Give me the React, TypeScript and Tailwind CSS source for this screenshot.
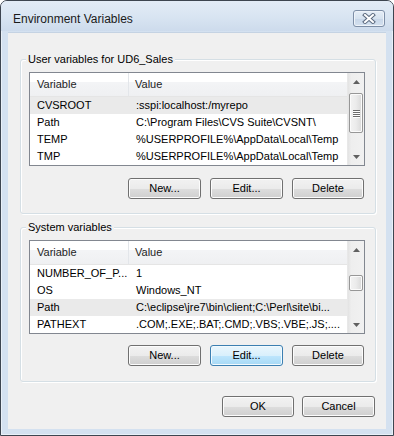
import React from 'react';

interface Row {
  name: string;
  value: string;
  selected?: boolean;
}

const userVars: Row[] = [
  { name: 'CVSROOT', value: ':sspi:localhost:/myrepo', selected: true },
  { name: 'Path', value: 'C:\\Program Files\\CVS Suite\\CVSNT\\' },
  { name: 'TEMP', value: '%USERPROFILE%\\AppData\\Local\\Temp' },
  { name: 'TMP', value: '%USERPROFILE%\\AppData\\Local\\Temp' },
];

const systemVars: Row[] = [
  { name: 'NUMBER_OF_P...', value: '1' },
  { name: 'OS', value: 'Windows_NT' },
  { name: 'Path', value: 'C:\\eclipse\\jre7\\bin\\client;C:\\Perl\\site\\bi...', selected: true },
  { name: 'PATHEXT', value: '.COM;.EXE;.BAT;.CMD;.VBS;.VBE;.JS;....' },
];

const font = "font-['Segoe_UI','Liberation_Sans',Arial,sans-serif]";

const WinButton: React.FC<{ label: string; focused?: boolean; className?: string }> = ({ label, focused, className = 'w-[73px]' }) => (
  <button
    type="button"
    className={`${className} h-[21px] rounded-[3px] border text-[11px] text-black leading-none flex items-center justify-center ${
      focused
        ? 'border-[#3c7fb1] bg-[linear-gradient(to_bottom,#eaf6fd_0%,#d9f0fc_50%,#bee6fd_51%,#a7d9f5_100%)] shadow-[inset_0_0_0_1px_#f2fafe]'
        : 'border-[#707070] bg-[linear-gradient(to_bottom,#f2f2f2_0%,#ebebeb_50%,#dddddd_51%,#cfcfcf_100%)] shadow-[inset_0_0_0_1px_#fcfcfc]'
    }`}
  >
    {label}
  </button>
);

const Arrow: React.FC<{ up?: boolean }> = ({ up }) => (
  <div className="h-[17px] flex items-center justify-center">
    <svg width="7" height="4" viewBox="0 0 7 4">
      {up ? <polygon points="3.5,0 7,4 0,4" fill="#606060" /> : <polygon points="0,0 7,0 3.5,4" fill="#606060" />}
    </svg>
  </div>
);

const ScrollBar: React.FC<{ thumbClass: string; grip?: boolean }> = ({ thumbClass, grip }) => (
  <div className="w-[17px] h-full flex flex-col bg-[linear-gradient(to_right,#e3e3e3_0%,#eeeeee_20%,#f1f1f1_100%)] border-l border-[#e8e8e8]">
    <Arrow up />
    <div className="flex-1 flex flex-col">
      <div
        className={`${thumbClass} mx-px rounded-[2px] border border-[#979797] bg-[linear-gradient(to_right,#f3f3f3_0%,#ebebeb_50%,#d9d9d9_100%)] shadow-[inset_0_0_0_1px_#fbfbfb] flex flex-col items-center justify-center gap-[1px]`}
      >
        {grip &&
          [0, 1, 2, 3].map((i) => <div key={i} className="w-[7px] h-[1px] bg-[#6b6b6b] shadow-[0_1px_0_#fff]" />)}
      </div>
    </div>
    <Arrow />
  </div>
);

const VarList: React.FC<{ rows: Row[]; thumbClass: string; grip?: boolean }> = ({ rows, thumbClass, grip }) => (
  <div className="h-[94px] border border-[#828790] bg-white flex overflow-hidden">
    <div className="flex-1 flex flex-col overflow-hidden">
      <div className="h-[24px] shrink-0 flex text-[11px] text-[#1e1e1e] bg-[linear-gradient(to_bottom,#ffffff_0%,#ffffff_40%,#f3f4f6_41%,#eff0f2_100%)] border-b border-[#e5e5e5]">
        <div className="w-[99px] pl-[7px] flex items-center border-r border-[#e3e6ea]">Variable</div>
        <div className="flex-1 pl-[6px] flex items-center">Value</div>
      </div>
      {rows.map((r) => (
        <div
          key={r.name}
          className={`h-[17px] shrink-0 flex items-center text-[11px] text-black whitespace-nowrap ${r.selected ? 'bg-[#eaeaea]' : ''}`}
        >
          <div className="w-[99px] pl-[7px] overflow-hidden">{r.name}</div>
          <div className="flex-1 pl-[7px] overflow-hidden text-ellipsis">{r.value}</div>
        </div>
      ))}
    </div>
    <ScrollBar thumbClass={thumbClass} grip={grip} />
  </div>
);

const GroupBox: React.FC<{ title: string; children: React.ReactNode }> = ({ title, children }) => (
  <div className="relative h-[155px] rounded-[3px] border border-[#d5dfe5] shadow-[inset_1px_1px_0_#fff,1px_1px_0_#fff] pt-[12px] pl-[8px] pr-[10px] flex flex-col">
    <span className="absolute -top-[8px] left-[5px] px-[2px] bg-[#f0f0f0] text-[11px] leading-[14px] text-black">{title}</span>
    {children}
  </div>
);

export default function App() {
  return (
    <div className={`${font} w-[394px] h-[436px] bg-white`}>
      <div className="w-[394px] h-[436px] border border-[#3d4550] rounded-t-[7px] bg-[#d4e1f0] shadow-[inset_0_0_0_1px_#e9f0f8] flex flex-col overflow-hidden">
        {/* Title bar */}
        <div className="h-[30px] shrink-0 flex items-start justify-between pl-[12px] pr-[8px] bg-[linear-gradient(to_bottom,#e2ebf6_0%,#d9e5f2_50%,#cddbec_100%)]">
          <span className="mt-[11px] text-[12px] leading-[14px] text-[#1a1a1a]">Environment Variables</span>
          <div className="mt-[9px] w-[32px] h-[17px] rounded-[3px] border border-[#7d8ea6] bg-[linear-gradient(to_bottom,#e6eef7_0%,#d6e2ef_50%,#c7d6e8_51%,#d4e1ef_100%)] shadow-[inset_0_0_0_1px_#eef3f9] flex items-center justify-center">
            <svg width="14" height="11" viewBox="0 0 14 11">
              <path d="M3 2 L11 9 M11 2 L3 9" stroke="#5d6b80" strokeWidth="4" strokeLinecap="square" />
              <path d="M3 2 L11 9 M11 2 L3 9" stroke="#ffffff" strokeWidth="2" strokeLinecap="square" />
            </svg>
          </div>
        </div>

        {/* Client area */}
        <div className="flex-1 mx-[7px] mb-[6px] mt-px bg-[#f0f0f0] border-t border-[#c5d3e3] pt-[26px] pl-[12px] pr-[10px] flex flex-col">
          <GroupBox title="User variables for UD6_Sales">
            <VarList rows={userVars} thumbClass="mt-[3px] h-[40px]" grip />
            <div className="mt-[12px] mr-px flex justify-end gap-[9px]">
              <WinButton label="New..." />
              <WinButton label="Edit..." />
              <WinButton label="Delete" className="w-[72px]" />
            </div>
          </GroupBox>

          <div className="mt-[13px]">
            <GroupBox title="System variables">
              <VarList rows={systemVars} thumbClass="mt-[17px] h-[16px]" />
              <div className="mt-[11px] mr-px flex justify-end gap-[9px]">
                <WinButton label="New..." />
                <WinButton label="Edit..." focused />
                <WinButton label="Delete" className="w-[72px]" />
              </div>
            </GroupBox>
          </div>

          <div className="mt-[14px] mr-px flex justify-end gap-[8px]">
            <WinButton label="OK" className="w-[72px]" />
            <WinButton label="Cancel" className="w-[73px]" />
          </div>
        </div>
      </div>
    </div>
  );
}
